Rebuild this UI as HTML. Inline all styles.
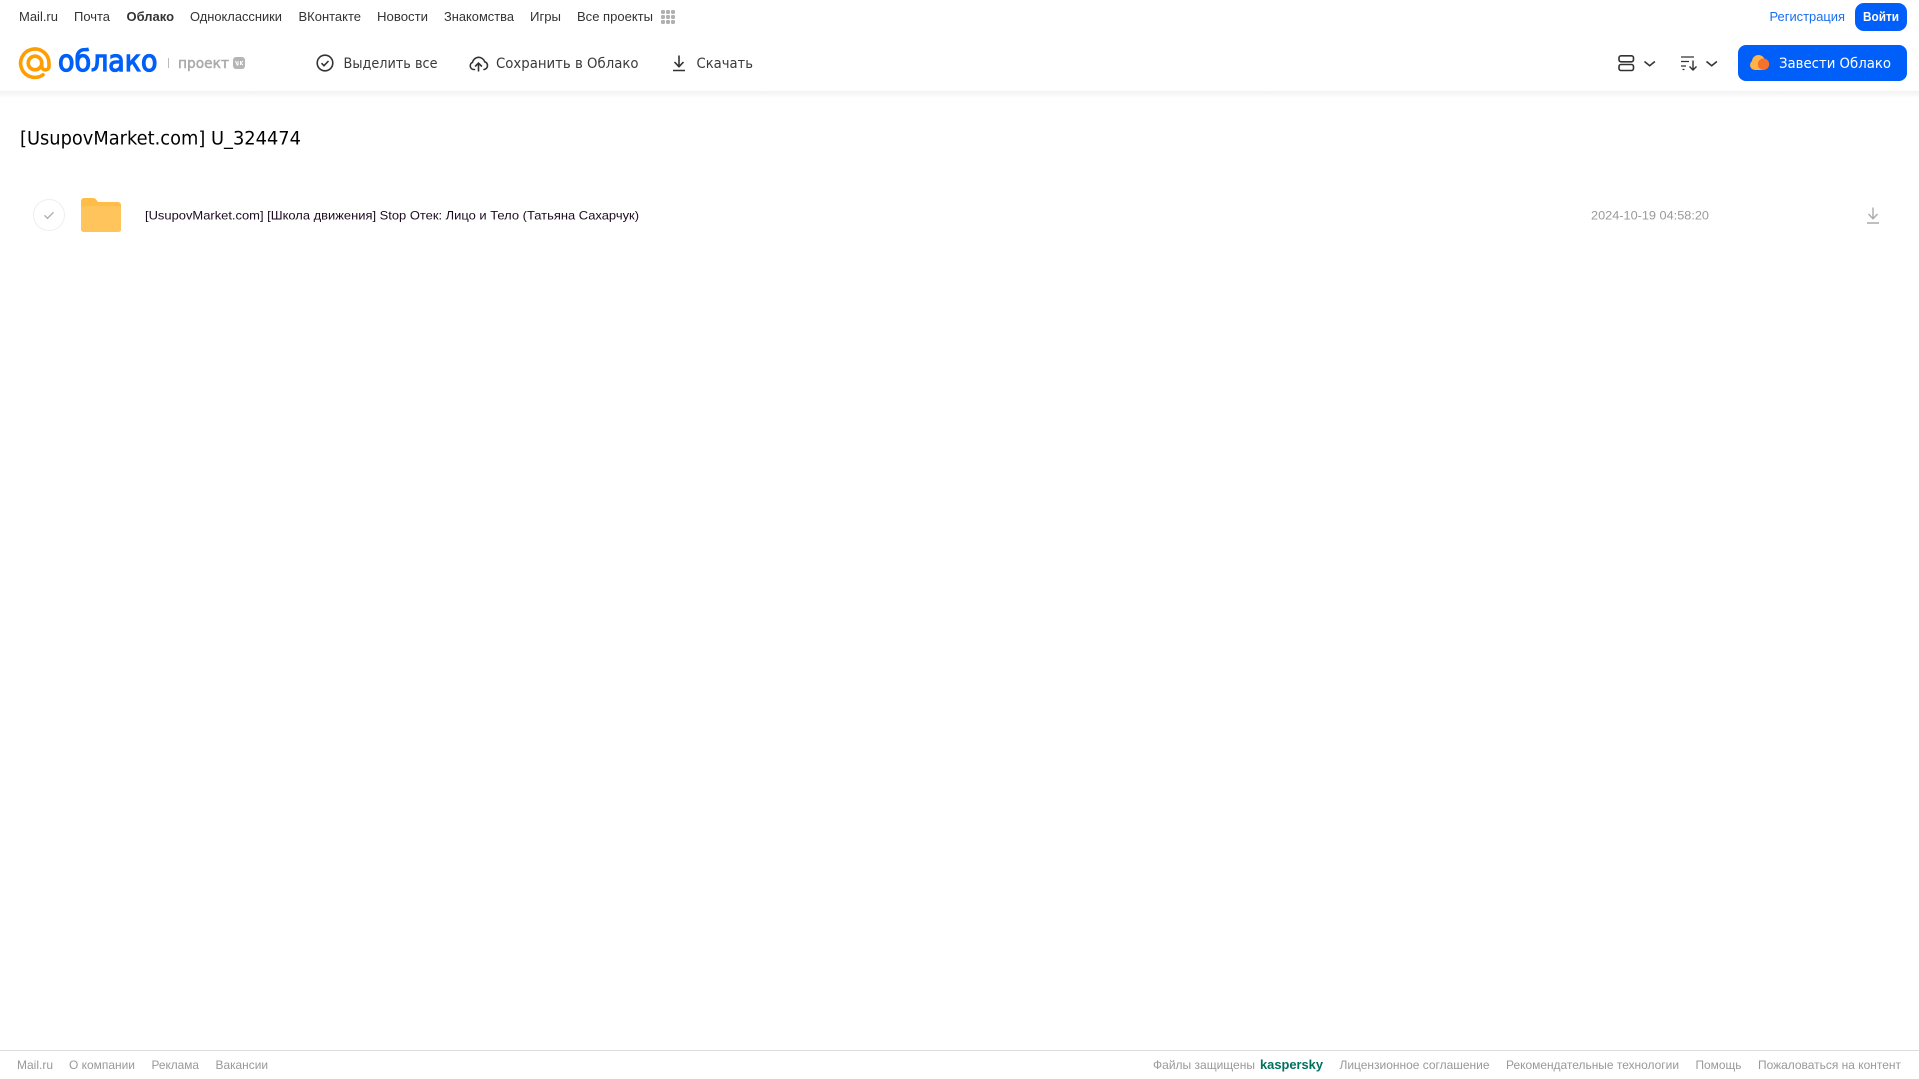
<!DOCTYPE html>
<html lang="ru">
<head>
<meta charset="utf-8">
<title>Облако</title>
<style>
html,body{margin:0;padding:0;width:1919px;height:1079px;overflow:hidden;background:#fff}
svg{display:block;position:absolute;left:0;top:0}
text{font-family:"Liberation Sans",sans-serif}
.n{font-size:13px;fill:#333}
.t{font-size:14px;fill:#3a3a3a;font-family:"DejaVu Sans",sans-serif}
.f{font-size:12px;fill:#999}
</style>
</head>
<body>
<svg width="1919" height="1079" viewBox="0 0 1919 1079" xmlns="http://www.w3.org/2000/svg">
<defs>
<linearGradient id="sh" x1="0" y1="0" x2="0" y2="1"><stop offset="0" stop-color="#f2f2f2"/><stop offset="1" stop-color="#fff"/></linearGradient>
</defs>
<rect x="0" y="91" width="1919" height="7" fill="url(#sh)"/>

<!-- top nav -->
<text class="n" x="19" y="21" textLength="39" lengthAdjust="spacingAndGlyphs">Mail.ru</text>
<text class="n" x="74" y="21" textLength="36" lengthAdjust="spacingAndGlyphs">Почта</text>
<text class="n" x="126.500" y="21" textLength="47.500" lengthAdjust="spacingAndGlyphs" font-weight="700">Облако</text>
<text class="n" x="190" y="21" textLength="92" lengthAdjust="spacingAndGlyphs">Одноклассники</text>
<text class="n" x="298.500" y="21" textLength="62.500" lengthAdjust="spacingAndGlyphs">ВКонтакте</text>
<text class="n" x="377" y="21" textLength="51" lengthAdjust="spacingAndGlyphs">Новости</text>
<text class="n" x="444" y="21" textLength="70" lengthAdjust="spacingAndGlyphs">Знакомства</text>
<text class="n" x="530" y="21" textLength="31" lengthAdjust="spacingAndGlyphs">Игры</text>
<text class="n" x="577" y="21" textLength="76" lengthAdjust="spacingAndGlyphs">Все проекты</text>
<g fill="#b0b0b0">
<rect x="661" y="10" width="4" height="4" rx="1.200"/><rect x="666" y="10" width="4" height="4" rx="1.200"/><rect x="671" y="10" width="4" height="4" rx="1.200"/>
<rect x="661" y="15" width="4" height="4" rx="1.200"/><rect x="666" y="15" width="4" height="4" rx="1.200"/><rect x="671" y="15" width="4" height="4" rx="1.200"/>
<rect x="661" y="20" width="4" height="4" rx="1.200"/><rect x="666" y="20" width="4" height="4" rx="1.200"/><rect x="671" y="20" width="4" height="4" rx="1.200"/>
</g>
<text x="1769.500" y="21" font-size="13" fill="#1a6ff0" textLength="75.500" lengthAdjust="spacingAndGlyphs">Регистрация</text>
<rect x="1855" y="3" width="52" height="28" rx="9" fill="#005ff9"/>
<text x="1863" y="21" font-size="13" font-weight="700" fill="#fff" textLength="36" lengthAdjust="spacingAndGlyphs">Войти</text>

<!-- logo -->
<g fill="none" stroke="#ff9e00" stroke-width="3.600" stroke-linecap="round">
<circle cx="35" cy="63" r="6.800"/>
<path d="M41.800 63v3.300a3.600 3.600 0 0 0 7.200 0V63A14.200 14.200 0 1 0 43 74.800"/>
</g>
<text x="58" y="71" font-size="29.500" fill="#005ff9" stroke="#005ff9" stroke-width="1.300" style="font-family:'DejaVu Sans',sans-serif" textLength="99.500" lengthAdjust="spacingAndGlyphs">облако</text>
<rect x="168" y="58" width="1" height="10" fill="#bbb"/>
<text x="178" y="68" font-size="14" fill="#aaa" stroke="#aaa" stroke-width=".5" style="font-family:'DejaVu Sans',sans-serif" textLength="51" lengthAdjust="spacingAndGlyphs">проект</text>
<rect x="233" y="57" width="12" height="12" rx="3" fill="#b5b5b5"/>
<path d="M235.500 61l1.700 4h.8v-4M240.500 61v4M243 61l-2.400 2 2.400 2" fill="none" stroke="#fff" stroke-width="1"/>

<!-- toolbar -->
<circle cx="325" cy="63" r="7.800" fill="none" stroke="#333" stroke-width="1.600"/>
<path d="M321.500 63.200l2.500 2.500 4.500-4.700" fill="none" stroke="#333" stroke-width="1.600"/>
<text class="t" x="343.500" y="68" textLength="94" lengthAdjust="spacingAndGlyphs">Выделить все</text>

<path d="M474.500 69.500h-.7a3.700 3.700 0 0 1-1.300-7.100 6.300 6.300 0 0 1 12.200-.6 3.900 3.900 0 0 1 .2 7.400l-.9.300" fill="none" stroke="#333" stroke-width="1.600" stroke-linecap="round"/>
<path d="M478.500 71.500v-8M475.100 66.500l3.400-3.400 3.400 3.400" fill="none" stroke="#333" stroke-width="1.600"/>
<text class="t" x="496" y="68" textLength="142.500" lengthAdjust="spacingAndGlyphs">Сохранить в Облако</text>

<path d="M679 55.500v11M674.500 62l4.500 4.700 4.500-4.700M673 70.500h12" fill="none" stroke="#333" stroke-width="1.600"/>
<text class="t" x="696.500" y="68" textLength="56.500" lengthAdjust="spacingAndGlyphs">Скачать</text>

<!-- view / sort -->
<g fill="none" stroke="#333" stroke-width="1.600">
<rect x="1619" y="55.800" width="14.500" height="6" rx="2"/>
<rect x="1619" y="64.500" width="14.500" height="6" rx="2"/>
<path d="M1644.500 61.500l5.200 4.200 5.200-4.200"/>
<path d="M1681 57h13M1681 61.500h8M1681 66h5M1682.500 69.500h2" stroke-width="1.200"/>
<path d="M1693 60.500v9M1689.500 66.500l3.500 3.500 3.500-3.500" stroke-width="1.400"/>
<path d="M1706.500 61.500l5.200 4.200 5.200-4.200"/>
</g>

<!-- CTA -->
<rect x="1738" y="45" width="169" height="36" rx="8" fill="#005ff9"/>
<g fill="#ffb347">
<circle cx="1755" cy="65" r="5"/>
<circle cx="1758.500" cy="61.500" r="6.500"/>
<rect x="1755" y="62" width="9" height="8"/>
</g>
<circle cx="1763.500" cy="64.200" r="5.700" fill="#f4722b"/>
<text x="1779" y="68" font-size="14" fill="#fff" style="font-family:'DejaVu Sans',sans-serif" textLength="112" lengthAdjust="spacingAndGlyphs">Завести Облако</text>

<!-- title -->
<text x="20" y="144.500" font-size="19" fill="#000" style="font-family:'DejaVu Sans',sans-serif" textLength="281" lengthAdjust="spacingAndGlyphs">[UsupovMarket.com] U_324474</text>

<!-- row -->
<circle cx="49" cy="215" r="15.500" fill="#fff" stroke="#eeeeee" stroke-width="1"/>
<path d="M44.500 215.300l3 3 6-6" fill="none" stroke="#aaa" stroke-width="1.300"/>
<path d="M81 201a3 3 0 0 1 3-3h9c1.500 0 2.300.5 3.200 1.600l1.800 2.400h20a3 3 0 0 1 3 3v24a3 3 0 0 1-3 3H84a3 3 0 0 1-3-3z" fill="#ffbd47"/>
<rect x="81" y="206" width="40" height="26" rx="2.500" fill="#ffc55c"/>
<text x="145" y="219.700" font-size="12" fill="#1c0a20" textLength="494" lengthAdjust="spacingAndGlyphs">[UsupovMarket.com] [Школа движения] Stop Отек: Лицо и Тело (Татьяна Сахарчук)</text>
<text x="1591" y="219.700" font-size="12" fill="#999" textLength="118" lengthAdjust="spacingAndGlyphs">2024-10-19 04:58:20</text>
<path d="M1873 207.500v11M1868.500 214l4.500 4.700 4.500-4.700M1867 223h12" fill="none" stroke="#aaa" stroke-width="1.400"/>

<!-- footer -->
<rect x="0" y="1050" width="1919" height="1" fill="#ddd"/>
<text class="f" x="17" y="1069" textLength="36" lengthAdjust="spacingAndGlyphs">Mail.ru</text>
<text class="f" x="69" y="1069" textLength="66" lengthAdjust="spacingAndGlyphs">О компании</text>
<text class="f" x="151.500" y="1069" textLength="47.500" lengthAdjust="spacingAndGlyphs">Реклама</text>
<text class="f" x="215.500" y="1069" textLength="52.500" lengthAdjust="spacingAndGlyphs">Вакансии</text>
<text class="f" x="1153" y="1069" textLength="102" lengthAdjust="spacingAndGlyphs">Файлы защищены</text>
<text x="1260" y="1069" font-size="13" font-weight="700" fill="#00705f" textLength="63" lengthAdjust="spacingAndGlyphs">kaspersky</text>
<text class="f" x="1339.500" y="1069" textLength="150" lengthAdjust="spacingAndGlyphs">Лицензионное соглашение</text>
<text class="f" x="1506" y="1069" textLength="173" lengthAdjust="spacingAndGlyphs">Рекомендательные технологии</text>
<text class="f" x="1695.500" y="1069" textLength="46" lengthAdjust="spacingAndGlyphs">Помощь</text>
<text class="f" x="1758" y="1069" textLength="143" lengthAdjust="spacingAndGlyphs">Пожаловаться на контент</text>
</svg>
</body>
</html>
